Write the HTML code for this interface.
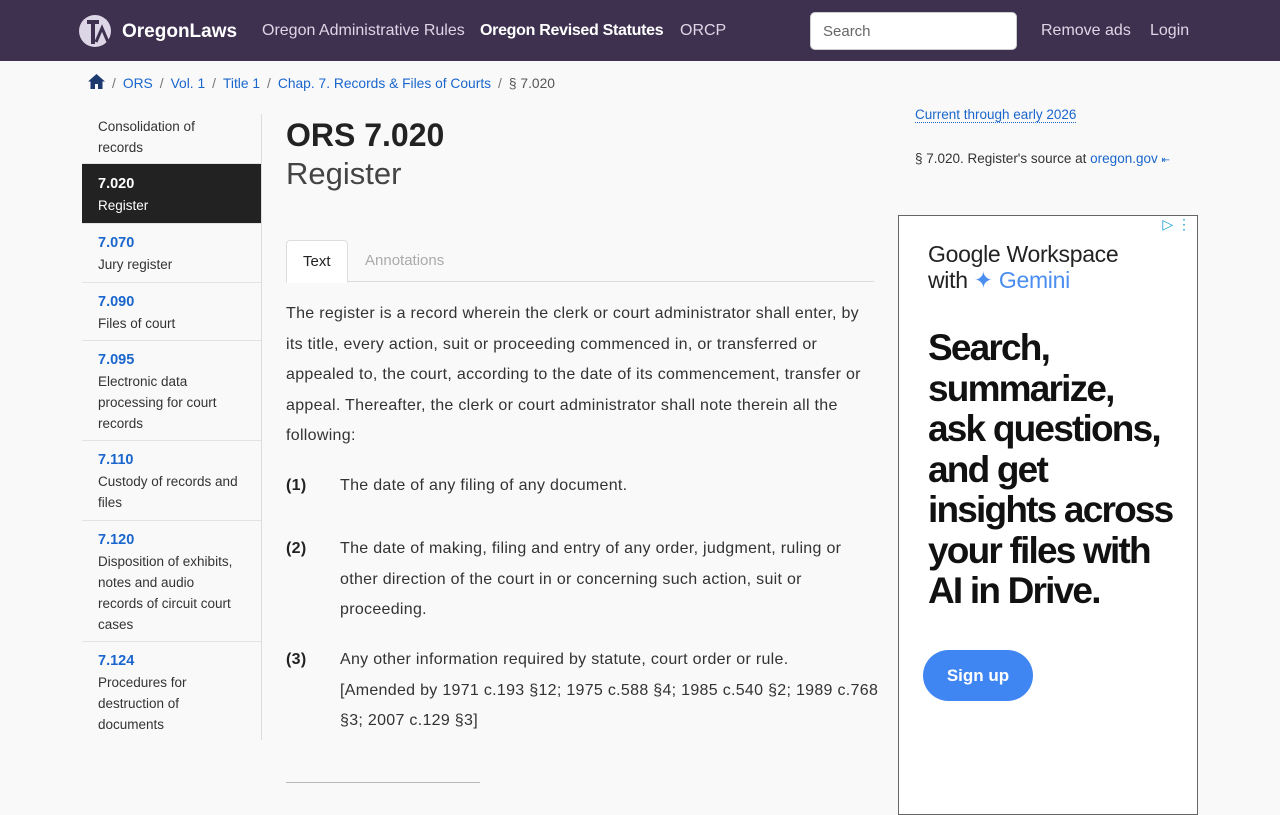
<!DOCTYPE html>
<html><head><meta charset="utf-8"><style>
*{box-sizing:border-box;margin:0;padding:0}
body{width:1280px;height:800px;overflow:hidden;background:#f9f9fa;font-family:"Liberation Sans",sans-serif;color:#222}
.hdr{position:absolute;left:0;top:0;width:1280px;height:61px;background:#3e3150}
.hdr .t{position:absolute;top:22px;font-size:16px;color:#ddd6e6;white-space:nowrap}
a{color:#1a66cc;text-decoration:none}
.bc{position:absolute;top:74px;left:88px;font-size:13.8px;color:#555;white-space:nowrap}
.bc span.s{color:#777;margin:0 7px}
.side{position:absolute;left:82px;top:114px;width:180px;border-right:1px solid #ddd;height:626px}
.si{padding:6px 16px;border-bottom:1px solid #e3e3e3;font-size:13.5px;line-height:21px;color:#333;white-space:nowrap}
.si b{color:#1a66cc;font-size:14.5px}
.si.act{background:#222;color:#fff}.si.act b{color:#fff}
.main{position:absolute;left:286px;top:116px;width:590px}
h1{font-size:32px;font-weight:bold;color:#222;line-height:38px}
h2{font-size:31px;font-weight:normal;color:#444;line-height:40px}
.tabs{position:absolute;top:124px;left:0;width:588px;height:42px;border-bottom:1px solid #ddd}
.tab{position:absolute;top:0;height:42px;padding:12px 16px;font-size:15px}
p,.it{font-size:16px;line-height:30.5px;color:#333;white-space:nowrap;letter-spacing:0.3px}
.it{position:absolute;left:0;width:590px}
.it b{position:absolute;left:0;color:#222}
.it div{margin-left:54px}
</style></head><body>
<div class="hdr">
<svg style="position:absolute;left:78px;top:14px" width="34" height="34" viewBox="0 0 34 34"><circle cx="17" cy="17" r="16" fill="#ddd6e6"/><path d="M9 6h12v4h-4v20h-4V10H9z" fill="#3e3150"/><path d="M18 28l6-14 6 14" stroke="#3e3150" stroke-width="3" fill="none"/></svg>
<div class="t" style="left:122px;top:21px;font-size:19px;font-weight:bold;color:#fff">OregonLaws</div>
<div class="t" style="left:262px">Oregon Administrative Rules</div>
<div class="t" style="left:480px;font-weight:bold;color:#fff;letter-spacing:-0.3px">Oregon Revised Statutes</div>
<div class="t" style="left:680px">ORCP</div>
<div style="position:absolute;left:810px;top:12px;width:207px;height:38px;background:#fff;border-radius:5px;border:1px solid #ccc;padding:10px 12px;font-size:15px;color:#666">Search</div>
<div class="t" style="left:1041px">Remove ads</div>
<div class="t" style="left:1150px">Login</div>
</div>
<div class="bc"><svg width="17" height="15" viewBox="0 0 17 15" style="vertical-align:-1px"><path d="M8.5 0L0 7.5h2.5V15h4.5v-5h3v5h4.5V7.5H17z" fill="#1c3a6e"/></svg><span class="s">/</span><a>ORS</a><span class="s">/</span><a>Vol. 1</a><span class="s">/</span><a>Title 1</a><span class="s">/</span><a>Chap. 7. Records &amp; Files of Courts</a><span class="s">/</span>§ 7.020</div>
<div class="side">
<div class="si" style="padding-top:2px;height:50px">Consolidation of<br>records</div>
<div class="si act" style="height:60px;padding-top:9px"><b>7.020</b><br>Register</div>
<div class="si" style="height:59px;padding-top:8px"><b>7.070</b><br>Jury register</div>
<div class="si" style="height:58px;padding-top:8px"><b>7.090</b><br>Files of court</div>
<div class="si" style="height:100px;padding-top:8px"><b>7.095</b><br>Electronic data<br>processing for court<br>records</div>
<div class="si" style="height:80px;padding-top:8px"><b>7.110</b><br>Custody of records and<br>files</div>
<div class="si" style="height:121px;padding-top:8px"><b>7.120</b><br>Disposition of exhibits,<br>notes and audio<br>records of circuit court<br>cases</div>
<div class="si" style="height:98px;padding-top:8px;border:0"><b>7.124</b><br>Procedures for<br>destruction of<br>documents</div>
</div>
<div class="main">
<h1>ORS 7.020</h1><h2>Register</h2>
<div class="tabs">
<div class="tab" style="left:0;background:#fff;border:1px solid #ddd;border-bottom:1px solid #fff;border-radius:4px 4px 0 0;height:43px">Text</div>
<div class="tab" style="left:63px;color:#aaa">Annotations</div>
</div>
<p style="position:absolute;top:183px;width:590px">The register is a record wherein the clerk or court administrator shall enter, by<br>its title, every action, suit or proceeding commenced in, or transferred or<br>appealed to, the court, according to the date of its commencement, transfer or<br>appeal. Thereafter, the clerk or court administrator shall note therein all the<br>following:</p>
<div class="it" style="top:355px"><b>(1)</b><div>The date of any filing of any document.</div></div>
<div class="it" style="top:418px"><b>(2)</b><div>The date of making, filing and entry of any order, judgment, ruling or<br>other direction of the court in or concerning such action, suit or<br>proceeding.</div></div>
<div class="it" style="top:529px"><b>(3)</b><div>Any other information required by statute, court order or rule.<br>[Amended by 1971 c.193 §12; 1975 c.588 §4; 1985 c.540 §2; 1989 c.768<br>§3; 2007 c.129 §3]</div></div>
<div style="position:absolute;top:666px;left:0;width:194px;border-top:1px solid #bbb"></div>
</div>
<div style="position:absolute;left:915px;top:107px;font-size:13.5px"><a style="border-bottom:1px dotted #1a66cc">Current through early 2026</a></div>
<div style="position:absolute;left:915px;top:151px;font-size:13.5px;color:#333">§ 7.020. Register's source at <a>oregon.gov</a> <span style="color:#1a66cc;font-size:10px">⇤</span></div>
<div style="position:absolute;left:898px;top:215px;width:300px;height:600px;background:#fff;border:1px solid #666">
<div style="position:absolute;right:6px;top:0;color:#1aa0d0;font-size:14px">▷ ⋮</div>
<div style="position:absolute;left:29px;top:25px;font-size:23px;line-height:26px;color:#222;letter-spacing:-0.3px">Google Workspace<br>with <span style="color:#4b8ef0">✦ Gemini</span></div>
<div style="position:absolute;left:29px;top:112px;font-size:37px;line-height:40.5px;font-weight:bold;color:#111;letter-spacing:-1.8px;white-space:nowrap">Search,<br>summarize,<br>ask questions,<br>and get<br>insights across<br>your files with<br>AI in Drive.</div>
<div style="position:absolute;left:24px;top:434px;width:110px;height:51px;border-radius:26px;background:#3f86f2;color:#fff;font-size:17px;font-weight:bold;text-align:center;line-height:51px">Sign up</div>
</div>
</body></html>
